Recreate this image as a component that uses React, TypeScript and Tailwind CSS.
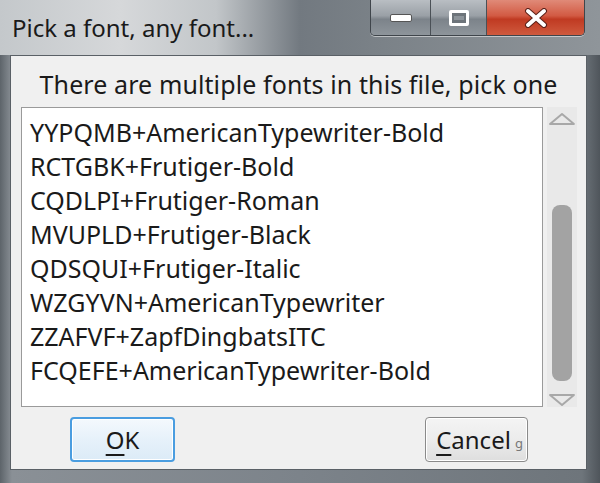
import { useState } from 'react';

const fonts = [
  'YYPQMB+AmericanTypewriter-Bold',
  'RCTGBK+Frutiger-Bold',
  'CQDLPI+Frutiger-Roman',
  'MVUPLD+Frutiger-Black',
  'QDSQUI+Frutiger-Italic',
  'WZGYVN+AmericanTypewriter',
  'ZZAFVF+ZapfDingbatsITC',
  'FCQEFE+AmericanTypewriter-Bold',
];

function CaptionButtons() {
  return (
    <div className="mr-[15px] flex h-[36px] overflow-hidden rounded-b-[5px] border border-t-0 border-[#3f454b] shadow-[0_1px_0_rgba(255,255,255,0.5)]">
      <div className="flex w-[60px] items-center justify-center border-r border-[#4a5056] bg-[linear-gradient(to_bottom,#b9bec3_0%,#9aa0a6_45%,#7c838a_55%,#8e959b_100%)]">
        <div className="h-[8px] w-[22px] rounded-[2px] border border-[#555] bg-white" />
      </div>
      <div className="flex w-[56px] items-center justify-center border-r border-[#4a5056] bg-[linear-gradient(to_bottom,#b9bec3_0%,#9aa0a6_45%,#7c838a_55%,#8e959b_100%)]">
        <div className="flex h-[16px] w-[20px] items-center justify-center rounded-[2px] border-[3px] border-white bg-[#6d747a]">
          <div className="h-[4px] w-[10px] bg-[#8d949a]" />
        </div>
      </div>
      <div className="flex w-[97px] items-center justify-center bg-[linear-gradient(to_bottom,#e08a78_0%,#d25a43_45%,#c03a22_55%,#cf5a3e_100%)]">
        <svg width="24" height="20" viewBox="0 0 24 20">
          <path d="M4 3 L20 17 M20 3 L4 17" stroke="#5a2018" strokeWidth="6" strokeLinecap="round" />
          <path d="M4 3 L20 17 M20 3 L4 17" stroke="#ffffff" strokeWidth="4" strokeLinecap="round" />
        </svg>
      </div>
    </div>
  );
}

export default function App() {
  const [selected] = useState<number | null>(null);

  return (
    <div
      className="flex h-[483px] w-[600px] flex-col bg-[linear-gradient(to_right,#5d646a_0%,#8a9096_2%,#7c838a_50%,#6e757b_97%,#4f555b_100%)]"
      style={{ fontFamily: '"Noto Sans", "Open Sans", sans-serif' }}
    >
      <div className="flex h-[55px] shrink-0 items-start justify-between bg-[linear-gradient(to_right,#c4c8cb_0%,#d6d8da_20%,#c2c6c9_36%,#727980_50%,#7a8187_62%,#8f959a_100%)]">
        <div className="pl-[12px] pt-[12px] text-[24px] leading-[32px] text-[#1a1a1a]">
          Pick a font, any font...
        </div>
        <CaptionButtons />
      </div>

      <div className="mb-[13px] ml-[10px] mr-[13px] flex flex-1 flex-col border border-[#5a6066] bg-[#f0f0f0]">
        <div className="pt-[11px] text-center text-[25px] leading-[34px] tracking-[0.1px] text-[#1a1a1a]">
          There are multiple fonts in this file, pick one
        </div>

        <div className="ml-[10px] mr-[9px] mt-[6px] flex h-[300px] gap-[4px]">
          <div className="flex-1 border border-[#9a9a9a] bg-white pl-[8px] pt-[7px]">
            {fonts.map((f, i) => (
              <div
                key={i}
                className={
                  'text-[25px] leading-[34px] text-[#1a1a1a] ' +
                  (selected === i ? 'bg-[#3399ff] text-white' : '')
                }
              >
                {f}
              </div>
            ))}
          </div>
          <div className="flex w-[30px] flex-col items-center bg-[#e9e9e9]">
            <svg width="28" height="14" viewBox="0 0 28 14" className="mt-[5px]">
              <path d="M2 12 L14 2 L26 12 Z" fill="none" stroke="#a8a8a8" strokeWidth="2" strokeLinejoin="round" />
            </svg>
            <div className="mt-[79px] h-[177px] w-[20px] rounded-[8px] bg-[#a3a3a3]" />
            <svg width="28" height="14" viewBox="0 0 28 14" className="mt-[12px]">
              <path d="M2 2 L14 12 L26 2 Z" fill="none" stroke="#a8a8a8" strokeWidth="2" strokeLinejoin="round" />
            </svg>
          </div>
        </div>

        <div className="ml-[59px] mr-[58px] mt-[10px] flex justify-between">
          <button className="flex h-[45px] w-[105px] items-center justify-center rounded-[4px] border-2 border-[#4a9de0] bg-[linear-gradient(to_bottom,#f4f9fd_0%,#e6f1fa_50%,#dcebf7_100%)] text-[24px] text-[#1a1a1a] shadow-[inset_0_0_0_1px_#ffffff]">
            <span>
              <span className="underline decoration-2 underline-offset-[5px]">O</span>K
            </span>
          </button>
          <button className="relative flex h-[45px] w-[103px] items-center justify-center rounded-[4px] border border-[#8a8a8a] bg-[linear-gradient(to_bottom,#f4f4f4_0%,#ececec_50%,#dedede_100%)] text-[24px] text-[#1a1a1a] shadow-[inset_0_0_0_1px_#ffffff]">
            <span className="pr-[6px]">
              <span className="underline decoration-2 underline-offset-[5px]">C</span>ancel
            </span>
            <span className="absolute bottom-[8px] right-[4px] text-[13px] text-[#777]">g</span>
          </button>
        </div>
      </div>
    </div>
  );
}
